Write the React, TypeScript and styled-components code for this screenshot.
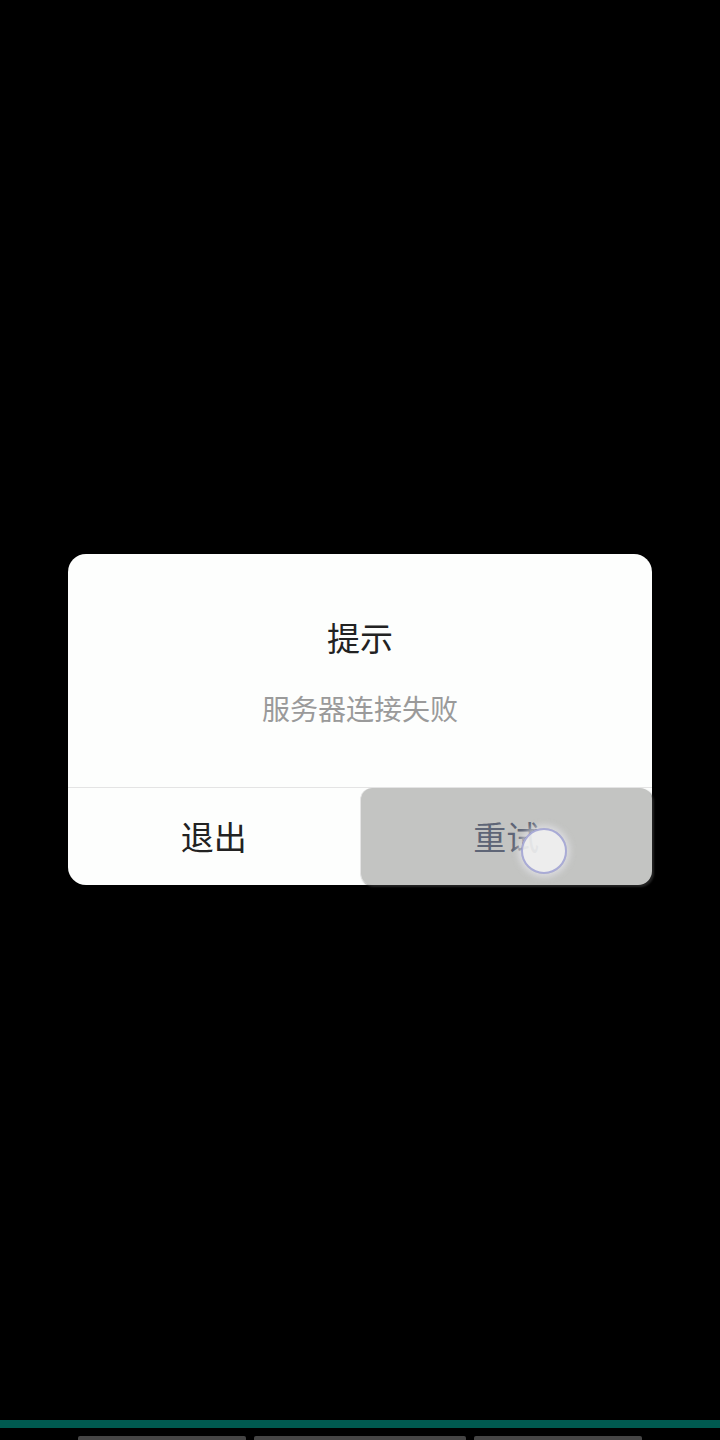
import React from "react";
import styled, { createGlobalStyle } from "styled-components";

const Global = createGlobalStyle`
  html, body { margin: 0; padding: 0; background: #000; }
  body { font-family: "Noto Sans CJK SC", "Noto Sans", sans-serif; }
`;

const Screen = styled.div`
  width: 720px;
  height: 1440px;
  background: #000;
  display: flex;
  flex-direction: column;
  overflow: hidden;
`;

const Stage = styled.div`
  flex: 1;
  display: flex;
  justify-content: center;
  padding-top: 554px;
`;

const Dialog = styled.div`
  width: 584px;
  height: 331px;
  background: #fdfefd;
  border-radius: 18px;
  display: flex;
  flex-direction: column;
  overflow: visible;
`;

const Body = styled.div`
  height: 234px;
  display: flex;
  flex-direction: column;
  align-items: center;
  padding-top: 60px;
  box-sizing: border-box;
  border-bottom: 1px solid #e4e4e4;
`;

const Title = styled.div`
  font-size: 33px;
  line-height: 46px;
  color: #222;
`;

const Message = styled.div`
  margin-top: 28px;
  font-size: 28px;
  line-height: 40px;
  color: #9a9a9a;
`;

const Actions = styled.div`
  flex: 1;
  display: flex;
`;

const Action = styled.div<{ $pressed?: boolean }>`
  position: relative;
  flex: 1;
  display: flex;
  align-items: center;
  justify-content: center;
  font-size: 33px;
  color: ${(p) => (p.$pressed ? "#5e6576" : "#222")};
  background: ${(p) => (p.$pressed ? "#c3c4c2" : "transparent")};
  border-radius: ${(p) => (p.$pressed ? "12px 12px 14px 12px" : "0 0 0 18px")};
  border-left: ${(p) => (p.$pressed ? "1px solid #e4e4e4" : "none")};
  box-shadow: ${(p) => (p.$pressed ? "2px 2px 2px rgba(60,60,60,0.6)" : "none")};
  padding-bottom: 2px;
`;

const Label = styled.span``;

const Touch = styled.div`
  position: absolute;
  left: 160px;
  top: 40px;
  width: 42px;
  height: 42px;
  border-radius: 50%;
  background: rgba(242, 242, 242, 0.9);
  border: 2px solid #a9abd6;
  box-shadow: 0 0 6px 3px rgba(230, 230, 235, 0.7);
`;

const NavArea = styled.div`
  height: 20px;
  display: flex;
  flex-direction: column;
`;

const TealBar = styled.div`
  height: 8px;
  background: #005a50;
`;

const Tabs = styled.div`
  display: flex;
  gap: 8px;
  padding: 8px 0 0 78px;
`;

const Tab = styled.div<{ $w: number }>`
  width: ${(p) => p.$w}px;
  height: 4px;
  background: #454545;
  border-radius: 2px 2px 0 0;
`;

export default function App() {
  return (
    <>
      <Global />
      <Screen>
        <Stage>
          <Dialog>
            <Body>
              <Title>提示</Title>
              <Message>服务器连接失败</Message>
            </Body>
            <Actions>
              <Action>
                <Label>退出</Label>
              </Action>
              <Action $pressed>
                <Label>重试</Label>
                <Touch />
              </Action>
            </Actions>
          </Dialog>
        </Stage>
        <NavArea>
          <TealBar />
          <Tabs>
            <Tab $w={168} />
            <Tab $w={212} />
            <Tab $w={168} />
          </Tabs>
        </NavArea>
      </Screen>
    </>
  );
}
